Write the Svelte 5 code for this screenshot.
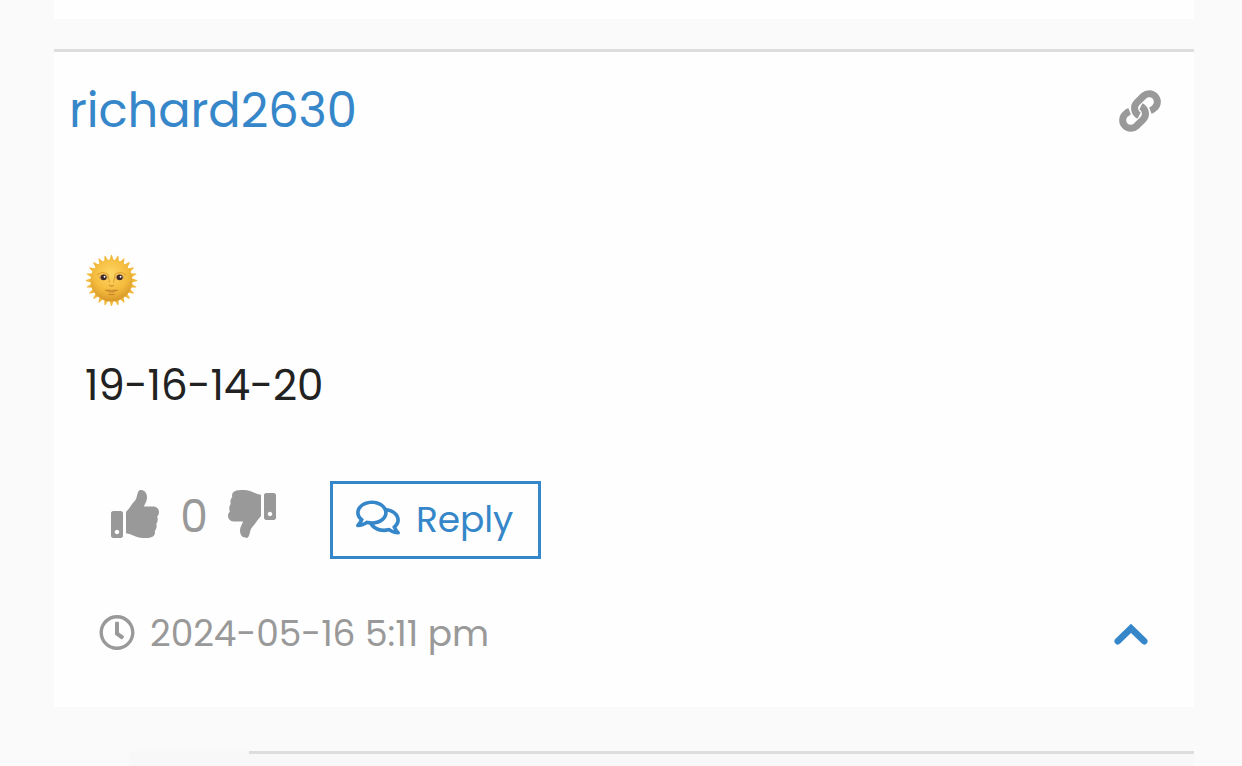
<script lang="ts">
  let { username = "richard2630", message = "19-16-14-20", date = "2024-05-16 5:11 pm" } = $props();
  let votes = $state(0);

  const rays = Array.from({ length: 24 }, (_, i) => i * 15);
</script>

<div class="thread">
  <div class="previous"></div>

  <article class="comment">
    <header>
      <a class="author" href="#author">{username}</a>
      <a class="permalink" href="#comment" aria-label="Link">
        <svg viewBox="0 0 42 42">
          <path d="M10.6 21.2C8.5 22 7 23.500 5.900 24.600A8.100 8.100 0 0 0 17.300 36.100L24.100 29.400A8.100 8.100 0 0 0 21.900 16.400" />
          <path d="M10.6 21.2C8.5 22 7 23.500 5.900 24.600A8.100 8.100 0 0 0 17.300 36.100L24.100 29.400A8.100 8.100 0 0 0 21.900 16.400" transform="rotate(180 21 21)" />
        </svg>
      </a>
    </header>

    <div class="body">
      <svg class="sun" viewBox="0 0 52 52">
        <defs>
          <radialGradient id="face" cx=".48" cy=".35" r=".68">
            <stop offset="0" stop-color="#ffd765" />
            <stop offset=".6" stop-color="#f4bb3d" />
            <stop offset="1" stop-color="#d49227" />
          </radialGradient>
        </defs>
        {#each rays as angle}
          <path d="M23.5 7.5L25.6.9h.8l2.1 6.600z" fill="#f0b93c" transform="rotate({angle} 26 26)" />
        {/each}
        <circle cx="26" cy="26" r="20.6" fill="url(#face)" />
        <path d="M12 20.5q4.5-4.5 10.5-.5l1.5 8M40 20.5q-4.5-4.5-10.5-.5L28 28" stroke="#d18b26" stroke-width="1" fill="none" opacity=".65" />
        <ellipse cx="18" cy="22.9" rx="4.3" ry="2.7" fill="#d9a75a" />
        <ellipse cx="34" cy="22.9" rx="4.3" ry="2.7" fill="#d9a75a" />
        <circle cx="18.3" cy="22.9" r="2.9" fill="#3c2828" />
        <circle cx="34" cy="22.9" r="2.9" fill="#3c2828" />
        <circle cx="19.2" cy="22.3" r=".9" fill="#fff" />
        <circle cx="34.9" cy="22.3" r=".9" fill="#fff" />
        <path d="M23.5 30.5q2.5 2 5 0" stroke="#c9862a" stroke-width="1" fill="none" />
        <path d="M20 35.5q3-1.5 6-.5 3-1 6 .5-6 6-12 0z" fill="#e0a13a" />
        <path d="M19.5 35.5q6.5 2 13 0M23 39.5q3 1 6 0" stroke="#bd7a22" stroke-width=".8" fill="none" />
      </svg>
      <p>{message}</p>
    </div>

    <div class="actions">
      <button class="vote" onclick={() => votes++} aria-label="Up">
        <svg viewBox="0 0 512 512"><path d="M104 224H24c-13.255 0-24 10.745-24 24v240c0 13.255 10.745 24 24 24h80c13.255 0 24-10.745 24-24V248c0-13.255-10.745-24-24-24zM64 472c-13.255 0-24-10.745-24-24s10.745-24 24-24 24 10.745 24 24-10.745 24-24 24zM384 81.452c0 42.416-25.97 66.208-33.277 94.548h101.723c33.397 0 59.397 27.746 59.553 58.098.084 17.938-7.546 37.249-19.439 49.197l-.11.11c9.836 23.337 8.237 56.037-9.308 79.469 8.681 25.895-.069 57.704-16.382 74.757 4.298 17.598 2.244 32.575-6.148 44.632C440.202 511.587 389.616 512 346.839 512l-2.845-.001c-48.287-.017-87.806-17.598-119.56-31.725-15.957-7.099-36.821-15.887-52.651-16.178-6.54-.12-11.783-5.457-11.783-11.998v-213.77c0-3.2 1.282-6.271 3.558-8.521 39.614-39.144 56.648-80.587 89.117-113.111 14.804-14.832 20.188-37.236 25.393-58.902C282.515 39.293 291.817 0 312 0c24 0 72 8 72 81.452z" /></svg>
      </button>
      <span class="count">{votes}</span>
      <button class="vote down" onclick={() => votes--} aria-label="Down">
        <svg viewBox="0 0 512 512"><path d="M0 56v240c0 13.255 10.745 24 24 24h80c13.255 0 24-10.745 24-24V56c0-13.255-10.745-24-24-24H24C10.745 32 0 42.745 0 56zm40 200c0-13.255 10.745-24 24-24s24 10.745 24 24-10.745 24-24 24-24-10.745-24-24zm272 256c-20.183 0-29.485-39.293-33.931-57.795-5.206-21.666-10.589-44.07-25.393-58.902-32.469-32.524-49.503-73.967-89.117-113.111a11.98 11.98 0 0 1-3.558-8.521V59.901c0-6.541 5.243-11.878 11.783-11.998 15.831-.29 36.694-9.079 52.651-16.178C256.189 17.598 295.709.017 343.995 0h2.844c42.777 0 93.363.413 113.774 29.737 8.392 12.057 10.446 27.034 6.148 44.632 16.312 17.053 25.063 48.863 16.382 74.757 17.544 23.432 19.143 56.132 9.308 79.469l.11.11c11.893 11.949 19.523 31.259 19.439 49.197-.156 30.352-26.157 58.098-59.553 58.098H350.723C358.03 364.34 384 388.132 384 430.548 384 504 336 512 312 512z" /></svg>
      </button>
      <button class="reply">
        <svg viewBox="0 0 576 512"><path d="M532 386.2c27.5-27.1 44-61.1 44-98.2 0-80-76.5-146.1-176.2-157.9C368.3 72.5 294.3 32 208 32 93.1 32 0 103.6 0 192c0 37 16.5 71 44 98.2-15.3 30.7-37.3 54.5-37.7 54.9-6.3 6.7-8.1 16.5-4.4 25 3.6 8.5 12 14 21.2 14 53.5 0 96.7-20.2 125.2-38.8 9.2 2.1 18.7 3.7 28.4 4.9C208.1 407.6 281.8 448 368 448c20.8 0 40.8-2.4 59.8-6.8C456.3 459.7 499.4 480 553 480c9.2 0 17.5-5.5 21.2-14 3.6-8.5 1.9-18.3-4.4-25-.4-.3-22.5-24.1-37.8-54.8zm-392.8-92.3L122.1 305c-14.1 9.1-28.5 16.3-43.1 21.4 2.7-4.7 5.4-9.7 8-14.8l15.5-31.1L77.7 256C64.2 242.6 48 220.7 48 192c0-60.7 73.3-112 160-112s160 51.3 160 112-73.3 112-160 112c-16.5 0-33-1.9-49-5.6l-19.8-4.5zM498.3 352l-24.7 24.4 15.5 31.1c2.6 5.1 5.3 10.1 8 14.8-14.6-5.1-29-12.3-43.1-21.4l-17.1-11.1-19.9 4.6c-16 3.7-32.5 5.6-49 5.6-54 0-102.2-20.1-131.3-49.7C338 339.5 416 272.9 416 192c0-3.4-.4-6.7-.7-10C479.7 196.5 528 238.8 528 288c0 28.7-16.2 50.6-29.7 64z" /></svg>
        <span>Reply</span>
      </button>
    </div>

    <footer>
      <svg class="clock" viewBox="8 8 496 496"><path d="M256 8C119 8 8 119 8 256s111 248 248 248 248-111 248-248S393 8 256 8zm0 448c-110.5 0-200-89.5-200-200S145.5 56 256 56s200 89.5 200 200-89.5 200-200 200zm61.8-104.4l-84.9-61.7c-3.1-2.3-4.9-5.9-4.9-9.7V116c0-6.6 5.4-12 12-12h32c6.6 0 12 5.4 12 12v141.7l66.8 48.6c5.4 3.9 6.5 11.4 2.6 16.8L334.6 349c-3.9 5.3-11.4 6.5-16.8 2.6z" /></svg>
      <time>{date}</time>
      <button class="collapse" aria-label="Collapse">
        <svg viewBox="0 0 34 22"><path d="M3.8 18.2L17 5.3l13.2 12.9" /></svg>
      </button>
    </footer>
  </article>

  <div class="next">
    <div class="avatar"></div>
    <div class="child"></div>
  </div>
</div>

<style>
  :global(body) {
    background: #fafafa;
    overflow: hidden;
  }
  .thread {
    box-sizing: border-box;
    height: 766px;
    padding: 0 48px 0 54px;
    overflow: hidden;
    font-family: Poppins, Inter, sans-serif;
    color: #999;
  }
  svg {
    display: block;
    fill: currentColor;
  }
  a {
    color: inherit;
    text-decoration: none;
  }
  button {
    padding: 0;
    border: none;
    background: none;
    color: inherit;
    font: inherit;
    cursor: pointer;
  }
  .previous {
    height: 19px;
    margin-bottom: 30px;
    background: #fefefe;
  }
  .comment {
    box-sizing: border-box;
    height: 658px;
    border-top: 3px solid #ddd;
    background: #fefefe;
  }
  header {
    display: flex;
    justify-content: space-between;
    align-items: center;
    height: 118px;
    padding: 0 33px 0 15px;
  }
  .author {
    color: #3687c9;
    font-size: 48px;
    letter-spacing: -0.1px;
  }
  .permalink svg {
    width: 42px;
    height: 42px;
    fill: none;
    stroke: currentColor;
    stroke-width: 7;
  }
  .body {
    padding: 82px 31px 0;
  }
  .sun {
    width: 53px;
    height: 53px;
    margin-top: 2px;
  }
  p {
    margin: 47px 0 0;
    color: #222;
    font-size: 42px;
    letter-spacing: -0.15px;
    line-height: 64px;
  }
  .actions {
    display: flex;
    align-items: flex-start;
    height: 78px;
    padding: 63px 57px 0;
  }
  .vote {
    padding-top: 9px;
  }
  .vote svg {
    width: 48px;
    height: 48px;
  }
  .down {
    transform: scaleX(-1);
  }
  .count {
    box-sizing: border-box;
    width: 69px;
    padding: 6px 0 0 1px;
    font-size: 44px;
    line-height: 60px;
    text-align: center;
  }
  .reply {
    box-sizing: border-box;
    display: flex;
    align-items: center;
    width: 211px;
    height: 78px;
    margin-left: 54px;
    padding: 0 0 0 23px;
    border: 3px solid #3687c9;
    color: #3687c9;
    font-size: 36px;
    letter-spacing: -0.1px;
  }
  .reply svg {
    width: 44px;
    height: 39px;
    margin-right: 16px;
    margin-top: -5px;
  }
  .reply span {
    margin-top: -2px;
  }
  footer {
    display: flex;
    align-items: center;
    height: 60px;
    padding: 44px 46px 0 45px;
    font-size: 36px;
    letter-spacing: -0.05px;
  }
  .clock {
    width: 36px;
    height: 35px;
    margin: -1px 15px 0 0;
  }
  .collapse {
    margin: 2px 0 0 auto;
    color: #3687c9;
  }
  .collapse svg {
    width: 34px;
    height: 22px;
  }
  .collapse path {
    fill: none;
    stroke: currentColor;
    stroke-width: 6.6;
    stroke-linecap: round;
  }
  .next {
    display: flex;
    height: 60px;
    margin: 44px 0 0 75px;
    background: #f8f8f8;
  }
  .avatar {
    width: 120px;
  }
  .child {
    flex: 1;
    border-top: 3px solid #ddd;
  }
</style>
